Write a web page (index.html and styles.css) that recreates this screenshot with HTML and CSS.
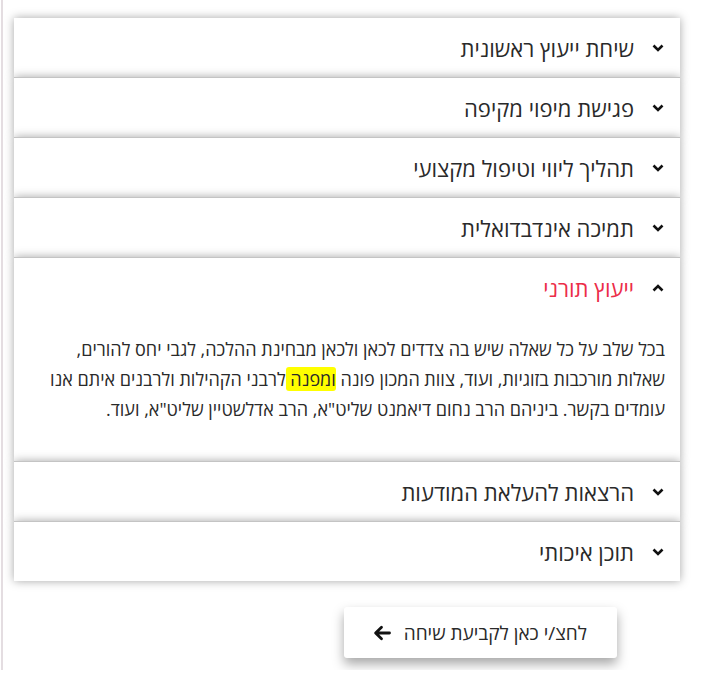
FILE: index.html
```html
<!DOCTYPE html>
<html lang="he" dir="rtl">
<head>
<meta charset="utf-8">
<title>אקורדיון</title>
<link rel="stylesheet" href="styles.css">
</head>
<body>
<div class="page">
  <div class="accordion">
    <div class="item">
      <div class="head"><svg class="chev" viewBox="0 0 12 8"><polyline points="1.5,1.5 6,6 10.5,1.5"/></svg><span class="title">שיחת ייעוץ ראשונית</span></div>
    </div>
    <div class="item">
      <div class="head"><svg class="chev" viewBox="0 0 12 8"><polyline points="1.5,1.5 6,6 10.5,1.5"/></svg><span class="title">פגישת מיפוי מקיפה</span></div>
    </div>
    <div class="item">
      <div class="head"><svg class="chev" viewBox="0 0 12 8"><polyline points="1.5,1.5 6,6 10.5,1.5"/></svg><span class="title">תהליך ליווי וטיפול מקצועי</span></div>
    </div>
    <div class="item">
      <div class="head"><svg class="chev" viewBox="0 0 12 8"><polyline points="1.5,1.5 6,6 10.5,1.5"/></svg><span class="title">תמיכה אינדבדואלית</span></div>
    </div>
    <div class="item open">
      <div class="head"><svg class="chev" viewBox="0 0 12 8"><polyline points="1.5,6.5 6,2 10.5,6.5"/></svg><span class="title active">ייעוץ תורני</span></div>
      <div class="body">
        <p>בכל שלב על כל שאלה שיש בה צדדים לכאן ולכאן מבחינת ההלכה, לגבי יחס להורים, שאלות מורכבות בזוגיות, ועוד, צוות המכון פונה <mark>ומפנה </mark>לרבני הקהילות ולרבנים איתם אנו עומדים בקשר. ביניהם הרב נחום דיאמנט שליט"א, הרב אדלשטיין שליט"א, ועוד.</p>
      </div>
    </div>
    <div class="item">
      <div class="head"><svg class="chev" viewBox="0 0 12 8"><polyline points="1.5,1.5 6,6 10.5,1.5"/></svg><span class="title">הרצאות להעלאת המודעות</span></div>
    </div>
    <div class="item">
      <div class="head"><svg class="chev" viewBox="0 0 12 8"><polyline points="1.5,1.5 6,6 10.5,1.5"/></svg><span class="title">תוכן איכותי</span></div>
    </div>
  </div>
  <div class="cta-row">
    <a class="cta" href="#"><span>לחצ/י כאן לקביעת שיחה</span><svg class="arrow" viewBox="0 0 18 16"><path d="M16.5 8H3M8.5 2.2L2.6 8l5.9 5.8"/></svg></a>
  </div>
</div>
</body>
</html>
```

FILE: styles.css
```css
html, body {
  margin: 0;
  padding: 0;
  background: #fff;
}
body {
  font-family: "Open Sans", "DejaVu Sans", sans-serif;
  color: #222;
}
.page {
  direction: ltr;
  margin-left: 1px;
  border-left: 2px solid #e4dde1;
  height: 670px;
  padding: 18px 22px 0 11px;
  box-sizing: border-box;
}
.accordion {
  direction: rtl;
  display: flex;
  flex-direction: column;
}
.item {
  background: #fff;
  box-shadow: 0 0 9px rgba(0, 0, 0, 0.35);
  border-top: 1px solid #c4c4c4;
}
.item:first-child {
  border-top: none;
}
.head {
  height: 59px;
  display: flex;
  align-items: center;
  gap: 18px;
  padding-right: 16px;
}
.chev {
  width: 12px;
  height: 8px;
  fill: none;
  stroke: #111;
  stroke-width: 2.6;
  flex: none;
}
.title {
  font-size: 22px;
  color: #2a2a2a;
}
.title.active {
  color: #ec2d49;
}
.body {
  padding: 17px 15px 37px 21px;
}
.body p {
  margin: 0;
  font-size: 18px;
  line-height: 30px;
  color: #2a2a2a;
}
mark {
  background: #ffff00;
  color: #2a2a2a;
  border-radius: 3px;
}
.cta-row {
  direction: ltr;
  display: flex;
  justify-content: flex-end;
  padding-right: 63px;
  margin-top: 26px;
}
.cta {
  direction: rtl;
  display: flex;
  align-items: center;
  gap: 13px;
  height: 51px;
  width: 273px;
  box-sizing: border-box;
  padding: 0 30px 0 0;
  background: #fff;
  border-radius: 3px;
  box-shadow: 0 6px 12px rgba(0, 0, 0, 0.35);
  text-decoration: none;
  color: #2a2a2a;
  font-size: 19px;
}
.arrow {
  width: 18px;
  height: 16px;
  fill: none;
  stroke: #111;
  stroke-width: 2.8;
  stroke-linecap: round;
  stroke-linejoin: round;
}
```
